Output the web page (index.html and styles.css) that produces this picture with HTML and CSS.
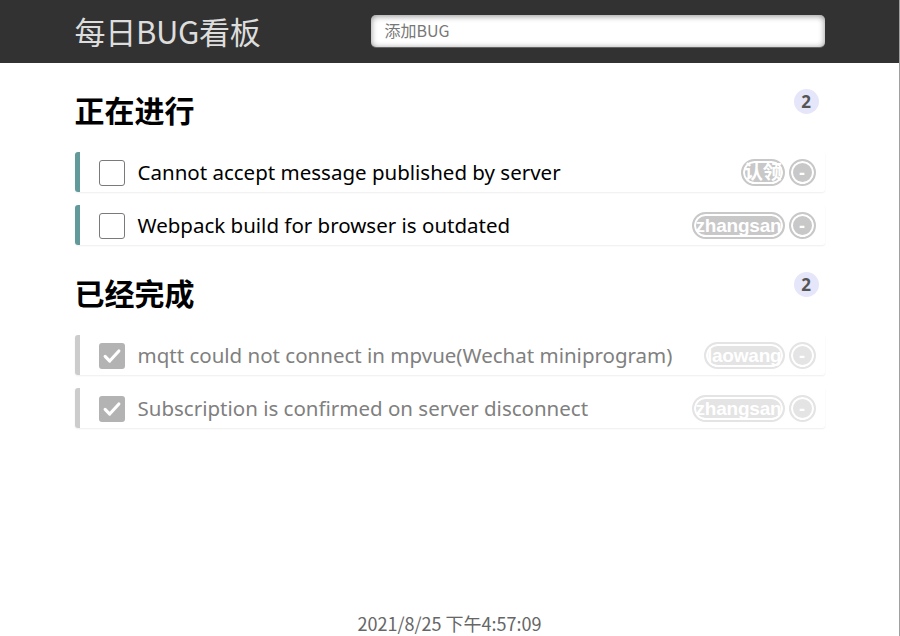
FILE: index.html
```html
<!DOCTYPE html>
<html lang="zh-CN">
<head>
<meta charset="utf-8">
<title>每日BUG看板</title>
<link rel="stylesheet" href="styles.css">
</head>
<body>
<header class="topbar">
  <div class="wrap topbar-inner">
    <h1 class="brand">每日BUG看板</h1>
    <input class="add-input" type="text" placeholder="添加BUG">
  </div>
</header>
<main class="wrap board">
  <section class="group">
    <h2 class="group-title"><span>正在进行</span><span class="count">2</span></h2>
    <ul class="list">
      <li class="item">
        <span class="check"></span>
        <span class="text">Cannot accept message published by server</span>
        <span class="owner">认领</span>
        <span class="del">-</span>
      </li>
      <li class="item">
        <span class="check"></span>
        <span class="text">Webpack build for browser is outdated</span>
        <span class="owner">zhangsan</span>
        <span class="del">-</span>
      </li>
    </ul>
  </section>
  <section class="group">
    <h2 class="group-title"><span>已经完成</span><span class="count">2</span></h2>
    <ul class="list">
      <li class="item done">
        <span class="check"><svg viewBox="0 0 24 24" width="22" height="22"><path d="M4.5 12.5l5 5 10-11" fill="none" stroke="#fff" stroke-width="3.4" stroke-linecap="round" stroke-linejoin="round"/></svg></span>
        <span class="text">mqtt could not connect in mpvue(Wechat miniprogram)</span>
        <span class="owner">laowang</span>
        <span class="del">-</span>
      </li>
      <li class="item done">
        <span class="check"><svg viewBox="0 0 24 24" width="22" height="22"><path d="M4.5 12.5l5 5 10-11" fill="none" stroke="#fff" stroke-width="3.4" stroke-linecap="round" stroke-linejoin="round"/></svg></span>
        <span class="text">Subscription is confirmed on server disconnect</span>
        <span class="owner">zhangsan</span>
        <span class="del">-</span>
      </li>
    </ul>
  </section>
</main>
<footer class="footer">2021/8/25 下午4:57:09</footer>
</body>
</html>
```

FILE: styles.css
```css
* { box-sizing: border-box; }
html, body { margin: 0; padding: 0; }
body {
  min-height: 100vh;
  display: flex;
  flex-direction: column;
  background: #fff;
  border-right: 1px solid #a0a0a0;
  font-family: "Noto Sans", "Noto Sans CJK SC", sans-serif;
  color: #000;
}
.wrap { width: 750px; margin: 0 auto; }
.topbar { background: #323232; height: 63px; }
.topbar-inner { display: flex; align-items: center; height: 63px; }
.brand {
  margin: 0;
  font-family: "Noto Sans CJK SC", sans-serif;
  font-weight: 400;
  font-size: 31px;
  line-height: 40px;
  color: #dddddd;
  letter-spacing: -0.3px;
  margin-top: -2px;
}
.add-input {
  margin-left: auto;
  width: 454px;
  height: 32px;
  margin-top: -1px;
  border: none;
  border-radius: 5px;
  padding: 0 14px 2px;
  font-family: "Noto Sans CJK SC", sans-serif;
  font-size: 16px;
  color: #333;
  background: #fff;
  box-shadow: 0 1px 0 rgba(255,255,255,0.24), inset 0 1px 6px rgba(0,0,0,0.45);
  outline: none;
}
.add-input::placeholder { color: #777; }
.board { padding-top: 26px; }
.group-title {
  margin: 0 0 23px;
  height: 40px;
  display: flex;
  align-items: flex-start;
  justify-content: space-between;
  font-family: "Noto Sans CJK SC", sans-serif;
  font-weight: 700;
  font-size: 30px;
  line-height: 40px;
  padding-left: 0;
}
.count {
  margin-top: 0;
  margin-right: 6px;
  width: 25px;
  height: 25px;
  border-radius: 50%;
  background: #e6e6fa;
  color: #555;
  font-family: "Noto Sans", sans-serif;
  font-size: 17px;
  font-weight: 700;
  line-height: 25px;
  text-align: center;
}
.list {
  list-style: none;
  margin: 0 0 27px;
  padding: 0;
  display: flex;
  flex-direction: column;
  gap: 13px;
}
.item {
  height: 40px;
  display: flex;
  align-items: center;
  background: #fff;
  border-left: 5px solid #629a9c;
  border-radius: 3px;
  box-shadow: 0 1px 2px rgba(0,0,0,0.07);
  padding: 0 9px 0 19px;
}
.check {
  width: 26px;
  height: 26px;
  flex: none;
  border: 1.5px solid #7a7a7a;
  border-radius: 3px;
  background: #fff;
  margin-right: 13px;
  margin-top: 1px;
  display: flex;
  align-items: center;
  justify-content: center;
}
.text {
  flex: 1;
  font-size: 20.5px;
  line-height: 40px;
  white-space: nowrap;
  padding-bottom: 1px;
}
.owner, .del {
  height: 27px;
  border: 2px solid #c8c8c8;
  background: #c8c8c8;
  box-shadow: inset 0 0 0 2px #fff;
  color: #fff;
  font-weight: 700;
  display: flex;
  align-items: center;
  justify-content: center;
  margin-top: 1px;
}
.owner {
  border-radius: 14px;
  padding: 0 1px;
  font-family: "Liberation Sans", "Noto Sans CJK SC", sans-serif;
  font-size: 19px;
  letter-spacing: -0.2px;
  line-height: 20px;
}
.del {
  width: 27px;
  border-radius: 50%;
  margin-left: 4px;
  font-family: "Liberation Sans", sans-serif;
  font-size: 18px;
  line-height: 20px;
}
.done { border-left-color: #cccccc; }
.done .text { color: #808080; }
.done .check { border: none; background: #b3b3b3; }
.done .owner, .done .del {
  border-color: #e4e4e4;
  background: #e4e4e4;
}
.footer {
  margin-top: auto;
  margin-bottom: 2px;
  text-align: center;
  font-family: "Noto Sans CJK SC", sans-serif;
  font-size: 18px;
  line-height: 22px;
  color: #666;
}
```
